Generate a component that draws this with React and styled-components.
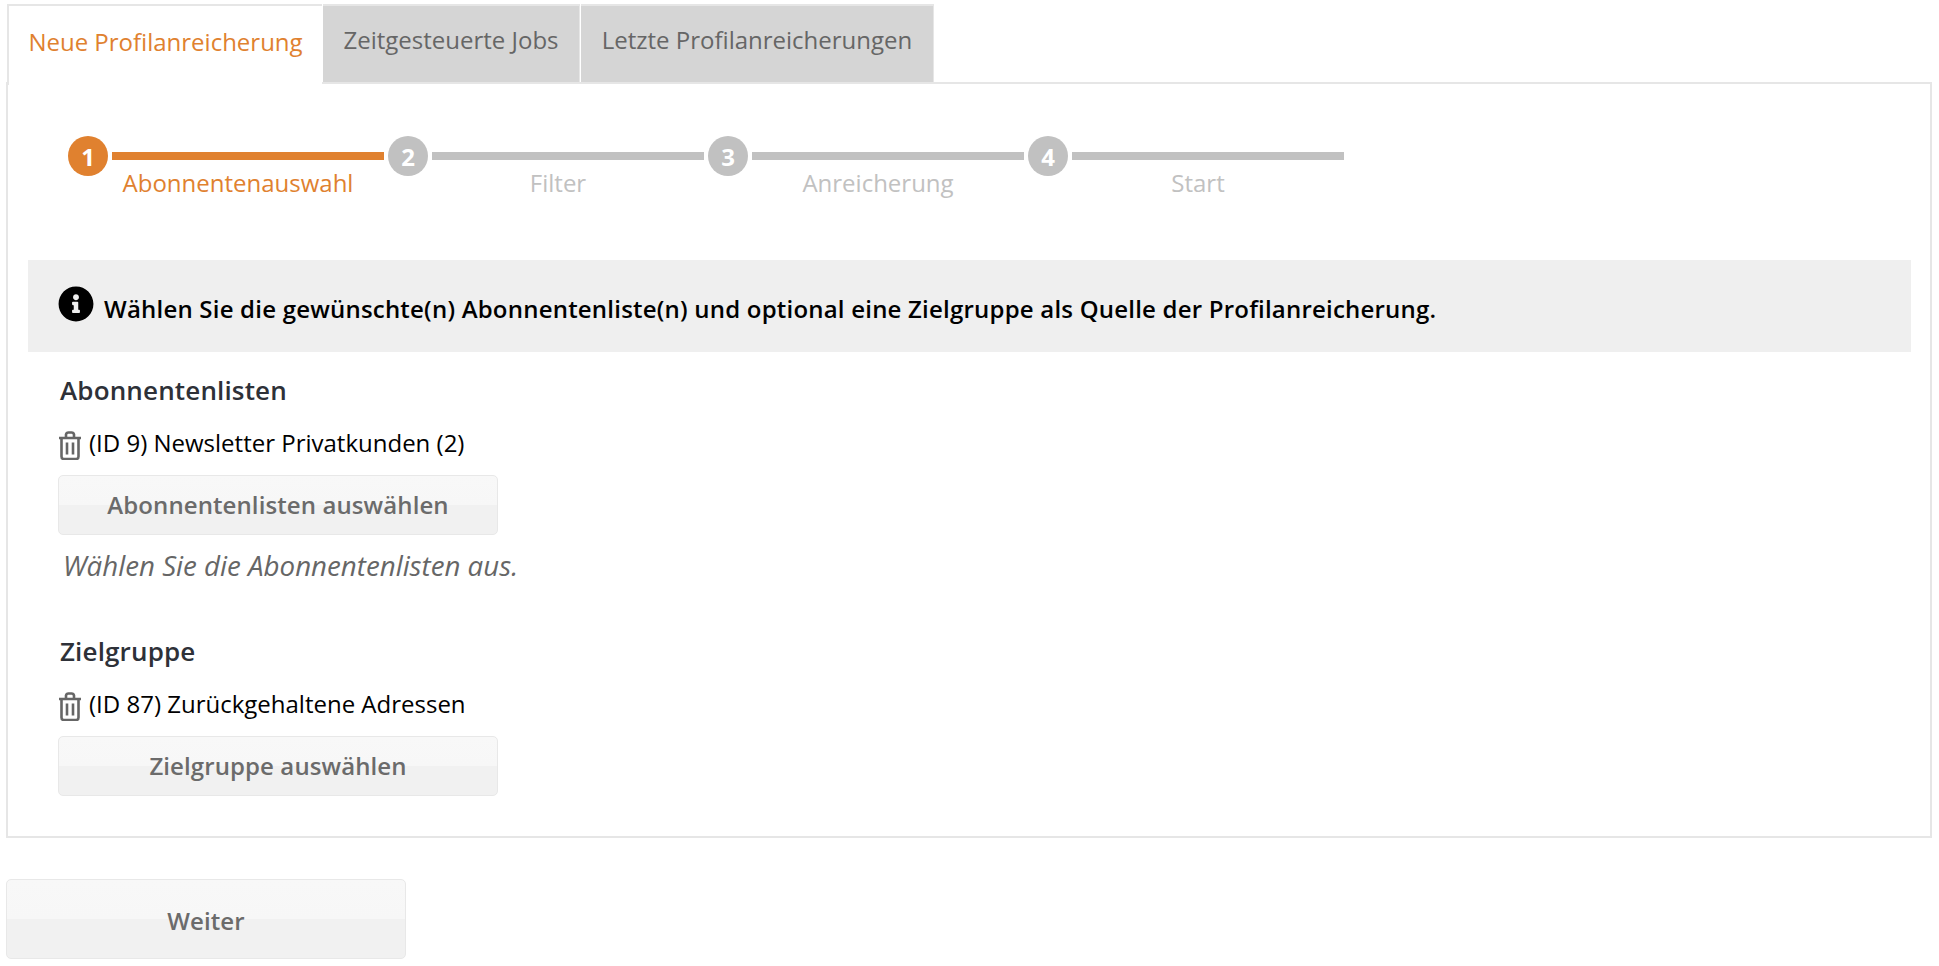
import React from 'react';
import styled, { createGlobalStyle } from 'styled-components';

const Global = createGlobalStyle`
  html, body { margin: 0; padding: 0; background: #fff; }
  body { font-family: "Open Sans", "Noto Sans", sans-serif; color: #000; }
`;
const Page = styled.div`
  width: 1939px; height: 966px; padding: 4px 7px 0 6px; box-sizing: border-box; overflow: hidden;
`;
const TabBar = styled.div`display: flex; height: 80px; position: relative; z-index: 1; margin-left: 1px;`;
const Tab = styled.div`
  display: flex; align-items: center; justify-content: center; box-sizing: border-box;
  height: ${p => p.$active ? '81px' : '80px'};
  width: ${p => p.$w}px;
  margin-right: 1px;
  border: 2px solid #e6e6e6;
  border-bottom: ${p => p.$active ? 'none' : '2px solid #e6e6e6'};
  border-left-width: ${p => p.$active ? '2px' : '0'};
  border-right-width: ${p => p.$active ? '0' : '1px'};
  border-right-color: ${p => p.$active ? 'transparent' : '#e6e6e6'};
  background: ${p => p.$active ? '#fff' : '#d5d5d5'};
  color: ${p => p.$active ? '#e0812f' : '#666'};
  font-size: 24px; padding-bottom: 9px;
`;
const Panel = styled.div`
  margin-top: -2px; border: 2px solid #e6e6e6; height: 756px; box-sizing: border-box;
  padding: 52px 19px 0 20px;
`;
const Stepper = styled.div`display: flex; margin-left: 40px; height: 72px;`;
const Step = styled.div`display: flex; flex-direction: column; width: 320px;`;
const StepTrack = styled.div`display: flex; align-items: center; gap: 4px;`;
const Circle = styled.div`
  width: 40px; height: 40px; border-radius: 50%; display: flex; align-items: center; justify-content: center;
  background: ${p => p.$on ? '#e0812f' : '#c1c1c1'}; color: #fff; font-weight: 700; font-size: 24px;
`;
const Bar = styled.div`width: 272px; height: 8px; background: ${p => p.$on ? '#e0812f' : '#c1c1c1'};`;
const StepLabel = styled.div`
  margin-left: 34px; width: 272px; text-align: center; font-size: 24px; line-height: 30px; margin-top: -8px;
  color: ${p => p.$on ? '#e0812f' : '#c1c1c1'};
`;
const Info = styled.div`
  margin-top: 52px; height: 92px; box-sizing: border-box; background: #efefef; display: flex; align-items: center; padding: 5px 0 0 30px; gap: 10px;
  font-size: 24px; font-weight: 600; color: #000; letter-spacing: 0.21px;
`;
const InfoIcon = styled.svg`width: 36px; height: 36px; flex: none; margin-top: -9px; fill: #000;`;
const Section = styled.section`padding-left: 30px;`;
const Heading = styled.h3`
  margin: 0; padding-left: 2px; font-size: 26px; font-weight: 600; line-height: 32px; color: #2e3138; letter-spacing: 0.15px; margin-top: ${p => p.$mt}px;
`;
const Row = styled.div`display: flex; align-items: flex-start; gap: 7px; font-size: 24px; line-height: 30px; margin-top: 22px; height: 30px;`;
const Trash = styled.svg`width: 24px; height: 29px; flex: none; margin-top: 3px; fill: none; stroke: #666; stroke-width: 2.6;`;
const Button = styled.button`
  display: block; box-sizing: border-box; width: ${p => p.$w}px; height: ${p => p.$h}px; margin-top: ${p => p.$mt || 0}px;
  border: 1px solid #e8e8e8; border-radius: 5px; padding: 0 0 2px;
  background: linear-gradient(#f8f8f8 0, #f7f7f7 50%, #f1f1f1 50%, #f1f1f1 100%);
  color: #6b6b6b; font: 600 24px "Open Sans", sans-serif; letter-spacing: 0.1px;
`;
const NextButton = styled(Button)`padding: 2px 0 0;`;
const Hint = styled.div`font-style: italic; font-size: 27.7px; line-height: 32px; color: #666; padding-left: 5px; margin-top: 14px;`;

const TrashIcon = () => (
  <Trash viewBox="0 0 24 29">
    <path d="M1 7h22M3.5 7v18.5a2.5 2.5 0 0 0 2.5 2.5h12a2.5 2.5 0 0 0 2.5-2.5V7M8 7V3.5A2.5 2.5 0 0 1 10.5 1.5h3A2.5 2.5 0 0 1 16 3.5V7M9 11.5v12M15 11.5v12" />
  </Trash>
);
const steps = ['Abonnentenauswahl', 'Filter', 'Anreicherung', 'Start'];

export default function App() {
  return (
    <Page>
      <Global />
      <TabBar>
        <Tab $active $w={315}>Neue Profilanreicherung</Tab>
        <Tab $w={257}>Zeitgesteuerte Jobs</Tab>
        <Tab $w={353}>Letzte Profilanreicherungen</Tab>
      </TabBar>
      <Panel>
        <Stepper>
          {steps.map((s, i) => (
            <Step key={s}>
              <StepTrack><Circle $on={i === 0}>{i + 1}</Circle><Bar $on={i === 0} /></StepTrack>
              <StepLabel $on={i === 0}>{s}</StepLabel>
            </Step>
          ))}
        </Stepper>
        <Info>
          <InfoIcon viewBox="0 0 512 512"><path d="M256 8C119 8 8 119 8 256s111 248 248 248 248-111 248-248S393 8 256 8zm0 110c23 0 42 19 42 42s-19 42-42 42-42-19-42-42 19-42 42-42zm56 254c0 7-5 12-12 12h-88c-7 0-12-5-12-12v-24c0-7 5-12 12-12h12v-64h-12c-7 0-12-5-12-12v-24c0-7 5-12 12-12h64c7 0 12 5 12 12v100h12c7 0 12 5 12 12v24z"/></InfoIcon>
          Wählen Sie die gewünschte(n) Abonnentenliste(n) und optional eine Zielgruppe als Quelle der Profilanreicherung.
        </Info>
        <Section>
          <Heading $mt={22}>Abonnentenlisten</Heading>
          <Row><TrashIcon />(ID 9) Newsletter Privatkunden (2)</Row>
          <Button $w={440} $h={60} $mt={17}>Abonnentenlisten auswählen</Button>
          <Hint>Wählen Sie die Abonnentenlisten aus.</Hint>
          <Heading $mt={54}>Zielgruppe</Heading>
          <Row><TrashIcon />(ID 87) Zurückgehaltene Adressen</Row>
          <Button $w={440} $h={60} $mt={17}>Zielgruppe auswählen</Button>
        </Section>
      </Panel>
      <NextButton $w={400} $h={80} $mt={41}>Weiter</NextButton>
    </Page>
  );
}
